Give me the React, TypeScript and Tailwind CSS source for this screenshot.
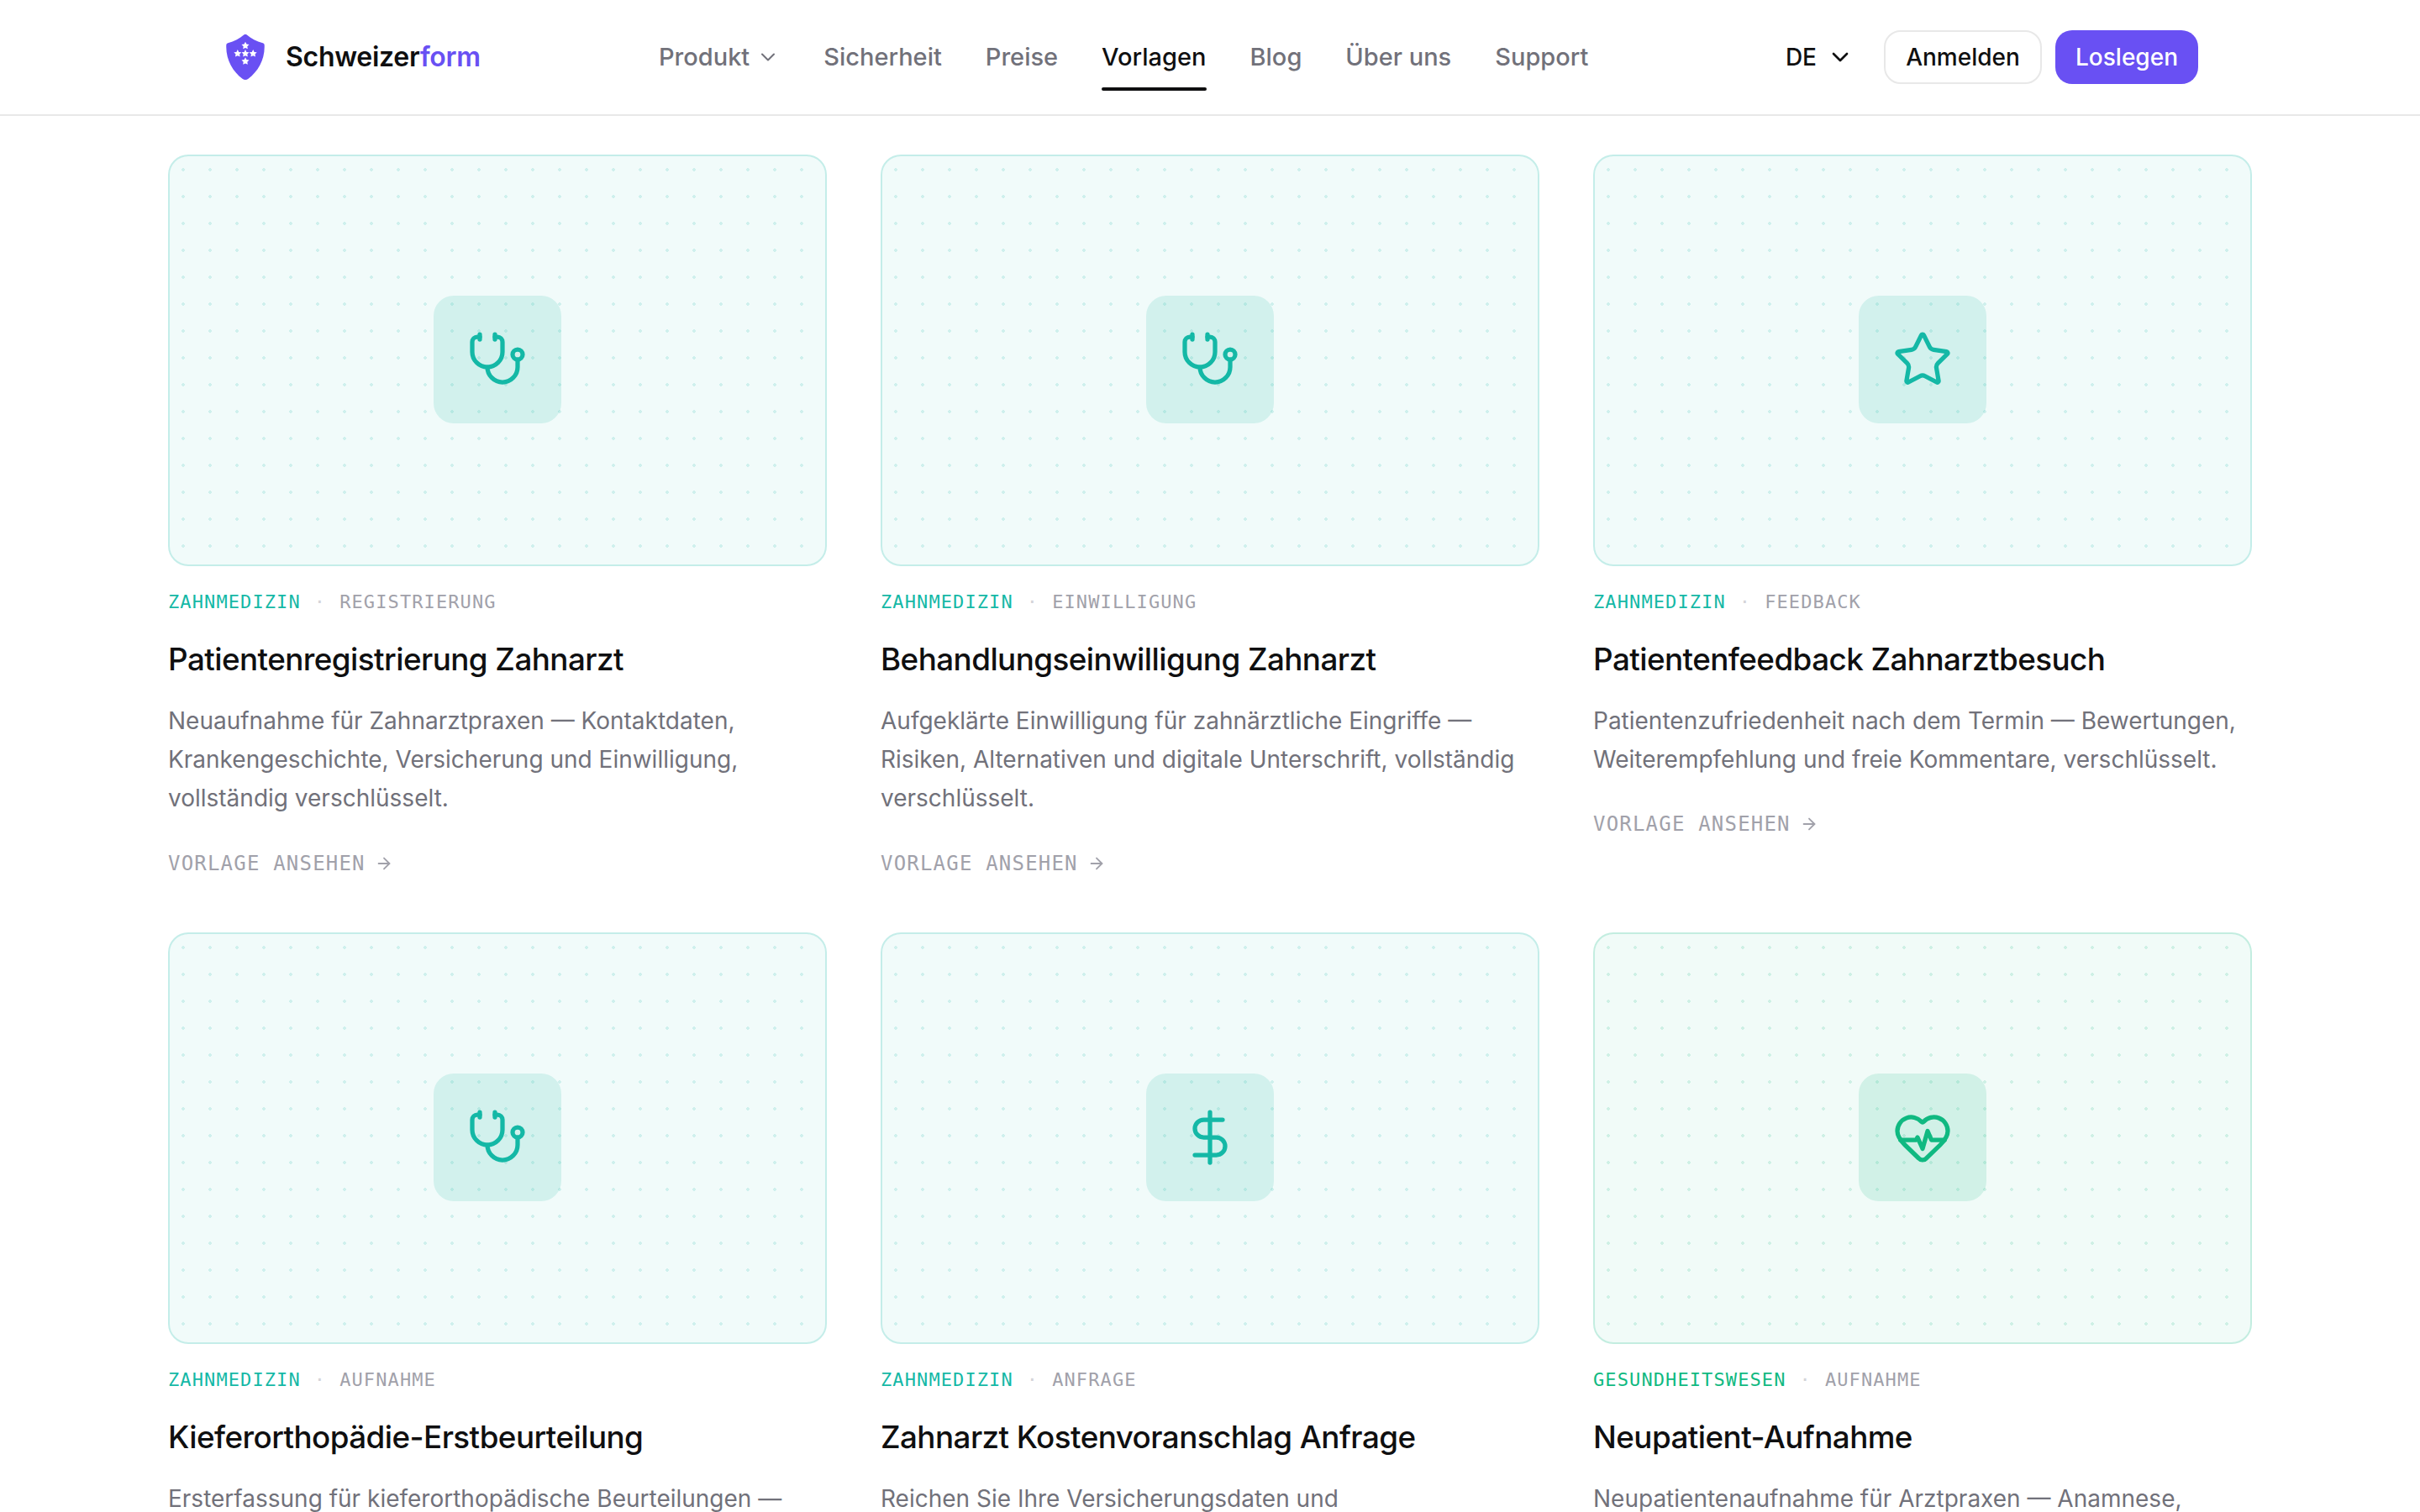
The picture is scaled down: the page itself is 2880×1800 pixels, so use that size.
import {
  ArrowRight,
  ChevronDown,
  DollarSign,
  HeartPulse,
  Star,
  Stethoscope,
  type LucideIcon,
} from "lucide-react";
import clsx from "clsx";

interface Template {
  icon: LucideIcon;
  tone: "teal" | "emerald";
  category: string;
  kind: string;
  title: string;
  description: string;
}

const NAV = [
  { label: "Produkt", menu: true },
  { label: "Sicherheit" },
  { label: "Preise" },
  { label: "Vorlagen", active: true },
  { label: "Blog" },
  { label: "Über uns" },
  { label: "Support" },
];

const TEMPLATES: Template[] = [
  {
    icon: Stethoscope,
    tone: "teal",
    category: "Zahnmedizin",
    kind: "Registrierung",
    title: "Patientenregistrierung Zahnarzt",
    description:
      "Neuaufnahme für Zahnarztpraxen — Kontaktdaten, Krankengeschichte, Versicherung und Einwilligung, vollständig verschlüsselt.",
  },
  {
    icon: Stethoscope,
    tone: "teal",
    category: "Zahnmedizin",
    kind: "Einwilligung",
    title: "Behandlungseinwilligung Zahnarzt",
    description:
      "Aufgeklärte Einwilligung für zahnärztliche Eingriffe — Risiken, Alternativen und digitale Unterschrift, vollständig verschlüsselt.",
  },
  {
    icon: Star,
    tone: "teal",
    category: "Zahnmedizin",
    kind: "Feedback",
    title: "Patientenfeedback Zahnarztbesuch",
    description:
      "Patientenzufriedenheit nach dem Termin — Bewertungen, Weiterempfehlung und freie Kommentare, verschlüsselt.",
  },
  {
    icon: Stethoscope,
    tone: "teal",
    category: "Zahnmedizin",
    kind: "Aufnahme",
    title: "Kieferorthopädie-Erstbeurteilung",
    description: "Ersterfassung für kieferorthopädische Beurteilungen —",
  },
  {
    icon: DollarSign,
    tone: "teal",
    category: "Zahnmedizin",
    kind: "Anfrage",
    title: "Zahnarzt Kostenvoranschlag Anfrage",
    description: "Reichen Sie Ihre Versicherungsdaten und",
  },
  {
    icon: HeartPulse,
    tone: "emerald",
    category: "Gesundheitswesen",
    kind: "Aufnahme",
    title: "Neupatient-Aufnahme",
    description: "Neupatientenaufnahme für Arztpraxen — Anamnese,",
  },
];

const TONES = {
  teal: {
    text: "text-[#14b8a6]",
    card: "border-[#14b8a6]/20 bg-[#14b8a6]/6",
    tile: "bg-[#14b8a6]/14",
    dots: "bg-[radial-gradient(#14b8a6_2px,transparent_2px)]",
  },
  emerald: {
    text: "text-[#10b981]",
    card: "border-[#10b981]/20 bg-[#10b981]/6",
    tile: "bg-[#10b981]/14",
    dots: "bg-[radial-gradient(#10b981_2px,transparent_2px)]",
  },
};

const STAR = "M0-4.6 1.4-1.8 4.5-1.4 2.3.8 2.8 3.9 0 2.5-2.8 3.9-2.3.8-4.5-1.4-1.4-1.8Z";

function Logo() {
  return (
    <svg width="48" height="56" viewBox="0 0 48 56" className="shrink-0">
      <path
        d="M22.5 1.3Q24 .3 25.5 1.3C31 6 37 9.5 44.8 11.2Q46.6 11.7 46.7 13.5C47.5 31 39 45 27.5 53.8Q24 56.2 20.5 53.8C9 45 .5 31 1.3 13.5Q1.4 11.7 3.2 11.2C11 9.5 17 6 22.5 1.3Z"
        fill="#6950f3"
      />
      {[[24, 14.4], [14.8, 23.7], [24, 23.7], [33.2, 23.7], [24, 32.9]].map(([x, y]) => (
        <path key={`${x}-${y}`} d={STAR} transform={`translate(${x} ${y})`} fill="#fff" />
      ))}
    </svg>
  );
}

function Header() {
  return (
    <header className="h-[138px] border-b-2 border-[#e8e8e8] bg-white">
      <div className="mx-auto flex h-full w-[2352px] items-center">
        <div className="flex w-[520px] items-center gap-6 pl-1">
          <Logo />
          <span className="text-[32px] font-semibold tracking-[-0.28px]">
            Schweizer<span className="text-[#6950f3]">form</span>
          </span>
        </div>
        <nav className="flex items-center gap-[52px] text-[29px] font-medium text-[#71717a]">
          {NAV.map((item) => (
            <a
              key={item.label}
              className={clsx("relative flex items-center gap-2", item.active && "text-[#0f0f10]")}
            >
              {item.label}
              {item.menu && <ChevronDown size={28} strokeWidth={1.75} />}
              {item.active && <span className="absolute inset-x-0 top-[58px] h-1 rounded-full bg-[#0f0f10]" />}
            </a>
          ))}
        </nav>
        <div className="ml-auto flex items-center text-[28px] font-medium">
          <span className="mr-9 flex items-center gap-3">
            DE
            <ChevronDown size={32} strokeWidth={2} />
          </span>
          <a className="mr-4 flex h-16 w-[188px] items-center justify-center rounded-[20px] border-2 border-[#e8e8e8]">
            Anmelden
          </a>
          <a className="flex h-16 w-[170px] items-center justify-center rounded-[20px] bg-[#6950f3] text-white">
            Loslegen
          </a>
        </div>
      </div>
    </header>
  );
}

function TemplateCard({ template }: { template: Template }) {
  const tone = TONES[template.tone];
  const Icon = template.icon;

  return (
    <article>
      <div className={clsx("relative flex h-[490px] items-center justify-center rounded-[24px] border-2", tone.card)}>
        <div className={clsx("absolute inset-0 rounded-[22px] bg-[length:32px_32px] opacity-15", tone.dots)} />
        <div className={clsx("mb-0.5 flex size-[152px] items-center justify-center rounded-[24px]", tone.tile, tone.text)}>
          <Icon size={72} strokeWidth={1.75} />
        </div>
      </div>
      <p className="mt-[26px] flex h-8 items-center font-['DejaVu_Sans_Mono',monospace] text-[22px] tracking-[1.1px] text-[#a1a1aa] uppercase">
        <span className={tone.text}>{template.category}</span>
        <span className="mx-4 text-[#d4d4d8]">·</span>
        <span>{template.kind}</span>
      </p>
      <h3 className="mt-[29px] text-[36.8px] leading-[48px] font-medium tracking-[-0.015em]">{template.title}</h3>
      <p className="mt-[26px] text-[28px] leading-[46.2px] text-[#71717a]">{template.description}</p>
      <p className="mt-[38px] flex h-8 items-center gap-[11px] font-['DejaVu_Sans_Mono',monospace] text-[24px] tracking-[1.2px] text-[#a1a1aa] uppercase">
        Vorlage ansehen
        <ArrowRight size={22} strokeWidth={2} />
      </p>
    </article>
  );
}

export default function App() {
  return (
    <div className="h-[1800px] w-[2880px] overflow-hidden bg-white font-[Inter,sans-serif] text-[#0f0f10] antialiased">
      <Header />
      <main className="mx-auto grid w-[2480px] auto-rows-[862px] grid-cols-3 gap-16 pt-[46px]">
        {TEMPLATES.map((template) => (
          <TemplateCard key={template.title} template={template} />
        ))}
      </main>
    </div>
  );
}
